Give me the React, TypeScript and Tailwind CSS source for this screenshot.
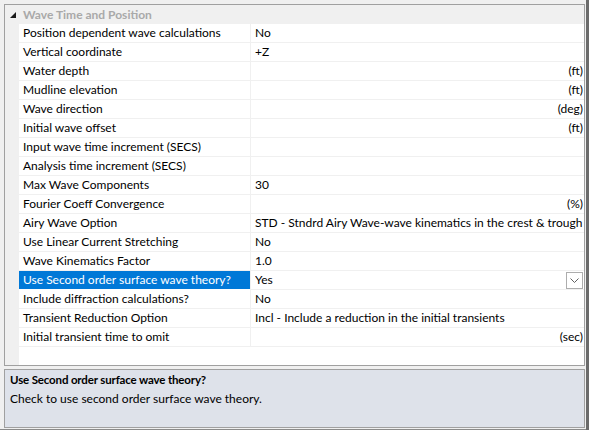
import React from "react";

type Row = { name: string; value?: string; unit?: string; selected?: boolean };

const rows: Row[] = [
  { name: "Position dependent wave calculations", value: "No" },
  { name: "Vertical coordinate", value: "+Z" },
  { name: "Water depth", unit: "(ft)" },
  { name: "Mudline elevation", unit: "(ft)" },
  { name: "Wave direction", unit: "(deg)" },
  { name: "Initial wave offset", unit: "(ft)" },
  { name: "Input wave time increment (SECS)" },
  { name: "Analysis time increment (SECS)" },
  { name: "Max Wave Components", value: "30" },
  { name: "Fourier Coeff Convergence", unit: "(%)" },
  { name: "Airy Wave Option", value: "STD - Stndrd Airy Wave-wave kinematics in the crest & trough" },
  { name: "Use Linear Current Stretching", value: "No" },
  { name: "Wave Kinematics Factor", value: "1.0" },
  { name: "Use Second order surface wave theory?", value: "Yes", selected: true },
  { name: "Include diffraction calculations?", value: "No" },
  { name: "Transient Reduction Option", value: "Incl - Include a reduction in the initial transients" },
  { name: "Initial transient time to omit", unit: "(sec)" },
];

export default function App() {
  return (
    <div
      className="w-[589px] h-[430px] bg-[#f0f0f0] flex text-[12px] text-black overflow-hidden"
      style={{ fontFamily: 'Lato, "Noto Sans", sans-serif' }}
    >
      <div className="w-[586px] min-w-0 flex flex-col pt-[4px] pl-[4px] pr-[1px] pb-[1px] border-b border-[#8a8a8a]">
        {/* property grid */}
        <div className="w-[581px] h-[362px] border border-[#a0a0a0] bg-white flex flex-col overflow-hidden">
          <div className="h-[19px] flex bg-[#f0f0f0] shrink-0">
            <div className="w-[14px] shrink-0 flex items-center justify-center">
              <svg width="6" height="6" viewBox="0 0 6 6" className="ml-[1px]">
                <polygon points="0,6 6,6 6,0" fill="#1a1a1a" />
              </svg>
            </div>
            <div className="pl-[4px] leading-[19px] font-bold text-[#a9a9a9]">Wave Time and Position</div>
          </div>
          {rows.map((r) => (
            <div key={r.name} className="h-[19px] flex shrink-0">
              <div className="w-[14px] shrink-0 bg-[#f0f0f0]" />
              <div
                className={
                  r.selected
                    ? "w-[231px] shrink-0 h-[18px] pl-[4px] leading-[18px] bg-[#0078d7] text-white whitespace-nowrap overflow-hidden"
                    : "w-[231px] shrink-0 h-[19px] pl-[4px] leading-[18px] border-b border-[#f0f0f0] whitespace-nowrap overflow-hidden"
                }
              >
                {r.name}
              </div>
              <div className="w-[1px] shrink-0 bg-[#f0f0f0]" />
              <div className="w-[333px] min-w-0 shrink-0 h-[19px] border-b border-[#f0f0f0] flex items-start pl-[4px] pr-[1px] whitespace-nowrap overflow-hidden">
                <span className="flex-1 min-w-0 leading-[18px] overflow-hidden">{r.value ?? ""}</span>
                {r.unit && <span className="leading-[18px]">{r.unit}</span>}
                {r.selected && (
                  <div className="w-[17px] h-[17px] mt-[1px] shrink-0 border border-[#adadad] bg-white flex items-center justify-center">
                    <svg width="9" height="5" viewBox="0 0 9 5">
                      <polyline points="0.5,0.5 4.5,4.5 8.5,0.5" fill="none" stroke="#606060" strokeWidth="1" />
                    </svg>
                  </div>
                )}
              </div>
            </div>
          ))}
          <div className="flex-1 flex">
            <div className="w-[14px] bg-[#f0f0f0]" />
            <div className="flex-1" />
          </div>
        </div>
        <div className="h-[3px]" />
        {/* description */}
        <div className="w-[581px] h-[59px] border border-[#a0a0a0] bg-[#dee2ea] pl-[5px]">
          <div className="font-bold text-[11.5px] tracking-[-0.15px] leading-[18px] mt-[1px]">Use Second order surface wave theory?</div>
          <div className="leading-[19px]">Check to use second order surface wave theory.</div>
        </div>
      </div>
      <div className="w-[3px] shrink-0 bg-[#6b6b6b]" />
    </div>
  );
}
